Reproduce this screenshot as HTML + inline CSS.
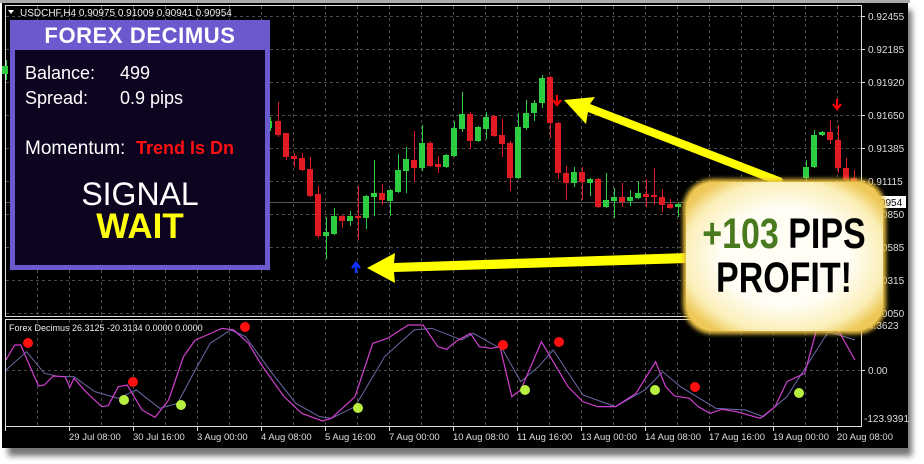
<!DOCTYPE html>
<html><head><meta charset="utf-8"><style>
html,body{margin:0;padding:0;width:924px;height:464px;overflow:hidden;background:#fff;}
svg{display:block}
text{font-family:"Liberation Sans",sans-serif}
</style></head><body>
<svg width="924" height="464" viewBox="0 0 924 464" xmlns="http://www.w3.org/2000/svg">
<defs>
<filter id="sh" x="-5%" y="-5%" width="115%" height="120%"><feGaussianBlur stdDeviation="3"/></filter>
<radialGradient id="bx" cx="50%" cy="50%" r="60%"><stop offset="0.55" stop-color="#fffdf4"/><stop offset="0.85" stop-color="#fbefb8"/><stop offset="1" stop-color="#eec95a"/></radialGradient>
<filter id="gl" x="-10%" y="-10%" width="120%" height="120%"><feGaussianBlur stdDeviation="2"/></filter>
<clipPath id="ip"><rect x="6" y="320" width="855" height="106"/></clipPath>
</defs>
<rect x="0" y="0" width="924" height="464" fill="#ffffff"/>
<rect x="8" y="10" width="904" height="446" fill="#777" filter="url(#sh)"/>
<rect x="0" y="0" width="910" height="3" fill="#aaa"/>
<rect x="2" y="3" width="906" height="445" fill="#000"/>
<rect x="5.5" y="5.5" width="856" height="311" fill="none" stroke="#ddd" stroke-width="1"/>
<rect x="5.5" y="319.5" width="856" height="107" fill="none" stroke="#ddd" stroke-width="1"/>
<g stroke="#4a4a4a" stroke-dasharray="3,3" stroke-width="1">
<path d="M6 16.5H861M6 49.5H861M6 82.5H861M6 115.5H861M6 148.5H861M6 181.5H861M6 214.5H861M6 247.5H861M6 280.5H861M6 313.5H861"/>
<path d="M37.5 6V316M69.5 6V316M101.5 6V316M133.5 6V316M165.5 6V316M197.5 6V316M229.5 6V316M261.5 6V316M293.5 6V316M325.5 6V316M357.5 6V316M389.5 6V316M421.5 6V316M453.5 6V316M485.5 6V316M517.5 6V316M549.5 6V316M581.5 6V316M613.5 6V316M645.5 6V316M677.5 6V316M709.5 6V316M741.5 6V316M773.5 6V316M805.5 6V316M837.5 6V316"/>
<path d="M37.5 320V426M69.5 320V426M101.5 320V426M133.5 320V426M165.5 320V426M197.5 320V426M229.5 320V426M261.5 320V426M293.5 320V426M325.5 320V426M357.5 320V426M389.5 320V426M421.5 320V426M453.5 320V426M485.5 320V426M517.5 320V426M549.5 320V426M581.5 320V426M613.5 320V426M645.5 320V426M677.5 320V426M709.5 320V426M741.5 320V426M773.5 320V426M805.5 320V426M837.5 320V426"/>
<path d="M6 370.5H861"/>
</g>
<path d="M6 202.5H861" stroke="#555" stroke-width="1"/>
<g fill="#ddd" font-size="10">
<text x="868" y="20">0.92455</text><text x="868" y="53">0.92185</text><text x="868" y="86">0.91920</text><text x="868" y="119">0.91650</text><text x="868" y="152">0.91385</text><text x="868" y="185">0.91115</text><text x="868" y="218">0.90850</text><text x="868" y="251">0.90585</text><text x="868" y="284">0.90315</text><text x="868" y="317">0.90050</text>
<text x="868" y="329">4.3623</text><text x="868" y="374">0.00</text><text x="864" y="422">-123.9391</text>
</g>
<rect x="862" y="196" width="44" height="12" fill="#fff"/><text x="866" y="206" font-size="10" fill="#000">0.90954</text>
<g stroke="#ddd"><path d="M862 16.5h3M862 49.5h3M862 82.5h3M862 115.5h3M862 148.5h3M862 181.5h3M862 214.5h3M862 247.5h3M862 280.5h3M862 313.5h3M862 370.5h3"/></g>
<!-- candles -->
<g fill="none">
<path stroke="#2ecc40" stroke-width="1" d="M6.5 60V80M270.5 117V131M326.5 217V259M334.5 208V235M350.5 211V226M366.5 195V229M374.5 160V216M390.5 189V216M398.5 154V193M406.5 147V193M422.5 125V171M446.5 154V168M454.5 121V157M462.5 92V132M478.5 126V142M486.5 112V139M518.5 113V179M526.5 100V130M534.5 100V121M542.5 75V108M574.5 167V187M590.5 178V196M606.5 173V208M614.5 188V218M630.5 190V206M638.5 181V199M678.5 203V217M806.5 160V185M814.5 130V168M822.5 131V136"/>
<path stroke="#2ecc40" stroke-width="6" d="M5 66V74M269 121V128M326 232V236M334 216V234M350 216V221M366 196V218M374 193V197M390 190V201M398 170V192M406 159V171M422 143V168M446 155V167M454 128V156M462 114V129M478 127V141M486 117V129M518 127V178M526 113V128M534 103V113M542 78V103M574 172V183M590 179V183M606 200V207M614 197V201M630 197V201M638 193V198M678 204V207M806 167V178M814 135V167M822 132V135"/>
<path stroke="#e01b24" stroke-width="1" d="M278.5 102V137M286.5 133V160M294.5 153V167M302.5 153V171M310.5 157V197M318.5 186V238M342.5 215V228M358.5 186V240M382.5 184V205M414.5 131V182M430.5 141V167M438.5 156V173M470.5 112V149M494.5 115V137M502.5 119V157M510.5 141V191M550.5 76V138M558.5 122V179M566.5 166V200M582.5 167V200M598.5 178V208M622.5 183V207M646.5 179V207M654.5 168V205M662.5 189V212M670.5 199V209M830.5 120V144M838.5 125V173M846.5 158V182M854.5 170V195"/>
<path stroke="#e01b24" stroke-width="6" d="M278 121V135M286 133V157M294 156V159M302 158V170M310 169V196M318 194V236M342 216V221M358 216V218M382 193V200M414 160V168M430 143V166M438 164V167M470 114V141M494 116V136M502 135V144M510 143V178M550 77V123M558 123V173M566 173V183M582 172V182M598 179V207M622 197V202M646 194V197M654 195V197M662 197V205M670 204V208M830 132V140M838 140V168M846 168V180M854 178V190"/>
</g>
<path d="M557 95v8M553 100l4 5 4-5" stroke="#f00" stroke-width="2.2" fill="none"/>
<path d="M837 99v8M833 104l4 5 4-5" stroke="#f00" stroke-width="2.2" fill="none"/>
<path d="M356 273v-9M352 268l4-5 4 5" stroke="#1030ff" stroke-width="2.6" fill="none"/>
<!-- indicator -->
<g clip-path="url(#ip)">
<g transform="translate(0,310) scale(0.5917,0.3333)" fill="none">
<polyline stroke="#6a6aa8" stroke-width="1" vector-effect="non-scaling-stroke" points="10,180 45,125 75,190 100,200 125,200 160,245 200,265 230,240 270,295 300,280 330,180 355,100 390,60 415,80 460,190 500,280 540,320 560,325 600,290 650,140 700,60 730,55 780,90 800,70 850,120 880,215 910,170 935,120 985,255 1040,290 1090,240 1120,185 1150,230 1210,295 1260,300 1290,320 1330,260 1400,65 1445,90"/>
<polyline stroke="#d040d0" stroke-width="1.2" vector-effect="non-scaling-stroke" points="10,150 25,105 35,105 65,228 75,225 90,198 110,200 118,232 125,205 145,245 172,290 183,287 200,230 215,225 240,300 262,322 285,270 310,140 330,90 350,75 375,55 395,60 420,100 440,160 480,260 510,310 545,333 560,325 600,260 630,100 655,85 690,45 715,45 740,110 755,118 770,95 795,70 810,110 830,115 845,110 865,260 880,240 915,95 935,155 960,230 985,275 1010,290 1040,290 1075,250 1108,155 1125,230 1140,258 1165,265 1180,290 1200,310 1220,298 1245,305 1285,325 1310,290 1330,215 1360,190 1380,60 1410,40 1445,150"/>
</g>
</g>
<g fill="#ff1010"><circle cx="28" cy="343" r="5"/><circle cx="133" cy="382" r="5"/><circle cx="245" cy="327" r="5"/><circle cx="503" cy="345" r="5"/><circle cx="559" cy="342" r="5"/><circle cx="695" cy="387" r="5"/></g>
<g fill="#b8f040"><circle cx="124" cy="400" r="5"/><circle cx="181" cy="405" r="5"/><circle cx="358" cy="408" r="5"/><circle cx="525" cy="390" r="5"/><circle cx="655" cy="390" r="5"/><circle cx="799" cy="393" r="5"/></g>
<text x="9" y="331" font-size="9" fill="#eee">Forex Decimus 26.3125 -20.3134 0.0000 0.0000</text>
<g stroke="#ddd"><path d="M5.5 427v4M69.5 427v4M133.5 427v4M197.5 427v4M261.5 427v4M325.5 427v4M389.5 427v4M453.5 427v4M517.5 427v4M581.5 427v4M645.5 427v4M709.5 427v4M773.5 427v4M837.5 427v4"/></g>
<g fill="#ddd" font-size="9.5">
<text x="69" y="440">29 Jul 08:00</text><text x="133" y="440">30 Jul 16:00</text><text x="197" y="440">3 Aug 00:00</text><text x="261" y="440">4 Aug 08:00</text><text x="325" y="440">5 Aug 16:00</text><text x="389" y="440">7 Aug 00:00</text><text x="453" y="440">10 Aug 08:00</text><text x="517" y="440">11 Aug 16:00</text><text x="581" y="440">13 Aug 00:00</text><text x="645" y="440">14 Aug 08:00</text><text x="709" y="440">17 Aug 16:00</text><text x="773" y="440">19 Aug 00:00</text><text x="837" y="440">20 Aug 08:00</text>
</g>
<path d="M8 10l6 0-3 4z" fill="#fff"/>
<text x="20" y="16" font-size="10" fill="#eee">USDCHF,H4  0.90975 0.91009 0.90941 0.90954</text>
<!-- panel -->
<rect x="10" y="20" width="260" height="250" fill="#6a5acd"/>
<rect x="15" y="50" width="250" height="215" fill="#0d0420"/>
<text x="140" y="43" font-size="22" font-weight="bold" fill="#fff" text-anchor="middle" letter-spacing="0.6">FOREX DECIMUS</text>
<text x="25" y="79" font-size="18" fill="#fff">Balance:</text><text x="120" y="79" font-size="18" fill="#fff">499</text>
<text x="25" y="104" font-size="18" fill="#fff">Spread:</text><text x="120" y="104" font-size="18" fill="#fff">0.9 pips</text>
<text x="25" y="154" font-size="19" fill="#fff">Momentum:</text><text x="136" y="154" font-size="18" font-weight="bold" fill="#ff1010">Trend Is Dn</text>
<text x="140" y="205" font-size="32" fill="#fff" text-anchor="middle">SIGNAL</text>
<text x="140" y="238" font-size="35" font-weight="bold" fill="#ffff10" text-anchor="middle">WAIT</text>
<g fill="#ffff00">
<polygon points="782,178 785,188 588,112 586,124 564,100 595,97 590,104"/>
<polygon points="688,253 688,263 394,272 395,283 367,268 395,253 394,263"/>
</g>
<rect x="683" y="179" width="203" height="155" rx="30" fill="#e8c040" filter="url(#gl)"/>
<rect x="686" y="182" width="197" height="149" rx="28" fill="url(#bx)"/>
<g font-family="'Liberation Sans Narrow','Liberation Sans',sans-serif" font-weight="bold" font-size="34" text-anchor="middle">
<text x="784" y="0" transform="translate(0,248) scale(1,1.25)"><tspan fill="#4a7a1e">+103</tspan><tspan fill="#000"> PIPS</tspan></text>
<text x="784" y="0" transform="translate(0,292) scale(1,1.25)" fill="#000">PROFIT!</text>
</g>
</svg>
</body></html>
